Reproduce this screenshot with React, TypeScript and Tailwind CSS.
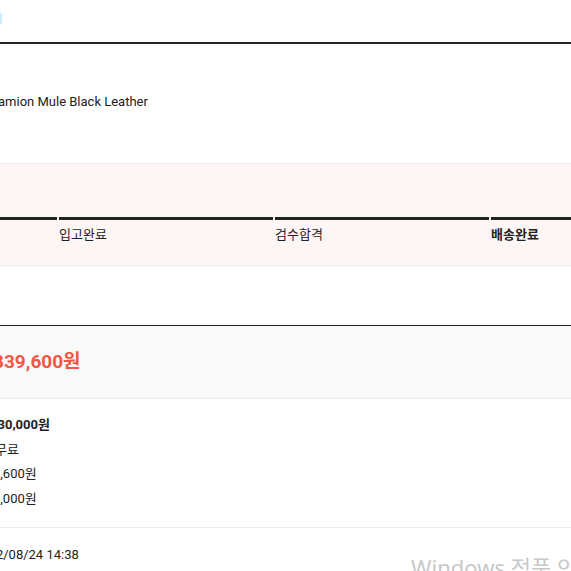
const font = { fontFamily: '"Roboto", "Noto Sans CJK KR", sans-serif' };

const steps = [
  { label: '', bold: false },
  { label: '입고완료', bold: false },
  { label: '검수합격', bold: false },
  { label: '배송완료', bold: true },
];

const rows = [
  { text: '830,000원', bold: true, offset: 'ml-[-10px]' },
  { text: '무료', bold: false, offset: 'ml-[-5px]' },
  { text: '6,600원', bold: false, offset: 'ml-[-7px]' },
  { text: '3,000원', bold: false, offset: 'ml-[-7px]' },
];

export default function App() {
  return (
    <div
      className="relative h-[571px] w-[571px] overflow-hidden bg-white text-[#222]"
      style={font}
    >
      {/* header */}
      <div className="h-[42px] pt-[13px]">
        <div className="h-[11px] w-[2px] bg-[#cdeeff]" />
      </div>
      <div className="h-[2px] bg-[#222]" />

      {/* product */}
      <div className="flex h-[119px] items-center pb-[3px]">
        <p className="ml-[-2px] whitespace-nowrap text-[13px]">amion Mule Black Leather</p>
      </div>

      {/* progress */}
      <div className="h-[103px] border-y border-[#ebebeb] bg-[#fdf6f5] pt-[53px]">
        <div className="ml-[-157px] flex gap-[2px]">
          {steps.map((s, i) => (
            <div key={i} className="w-[214px] shrink-0">
              <div className="h-[3px] bg-[#222]" />
              <p className={`mt-[5px] text-[13px] ${s.bold ? 'font-bold' : ''}`}>{s.label}</p>
            </div>
          ))}
        </div>
      </div>

      <div className="h-[59px]" />

      {/* total */}
      <div className="border-t border-[#222]">
        <div className="flex h-[73px] items-center border-b border-[#ebebeb] bg-[#fafafa]">
          <p className="ml-[-7px] whitespace-nowrap text-[19px] font-bold text-[#f15746]">839,600원</p>
        </div>
      </div>

      {/* breakdown */}
      <div className="flex h-[129px] flex-col gap-[6.7px] border-b border-[#ebebeb] pt-[17px]">
        {rows.map((r, i) => (
          <p
            key={i}
            className={`h-[18px] whitespace-nowrap text-[13px] leading-[18px] ${r.offset} ${r.bold ? 'font-bold' : ''}`}
          >
            {r.text}
          </p>
        ))}
      </div>

      {/* date */}
      <div className="pt-[17px]">
        <p className="ml-[-26px] whitespace-nowrap text-[13px]">2022/08/24 14:38</p>
      </div>

      {/* windows watermark */}
      <p
        className="pointer-events-none absolute left-[411px] top-[551px] whitespace-nowrap text-[22px] text-[#c8c8c8]"
        style={{ fontFamily: '"Noto Sans", "Noto Sans CJK KR", sans-serif' }}
      >
        Windows 정품 인증
      </p>
    </div>
  );
}
